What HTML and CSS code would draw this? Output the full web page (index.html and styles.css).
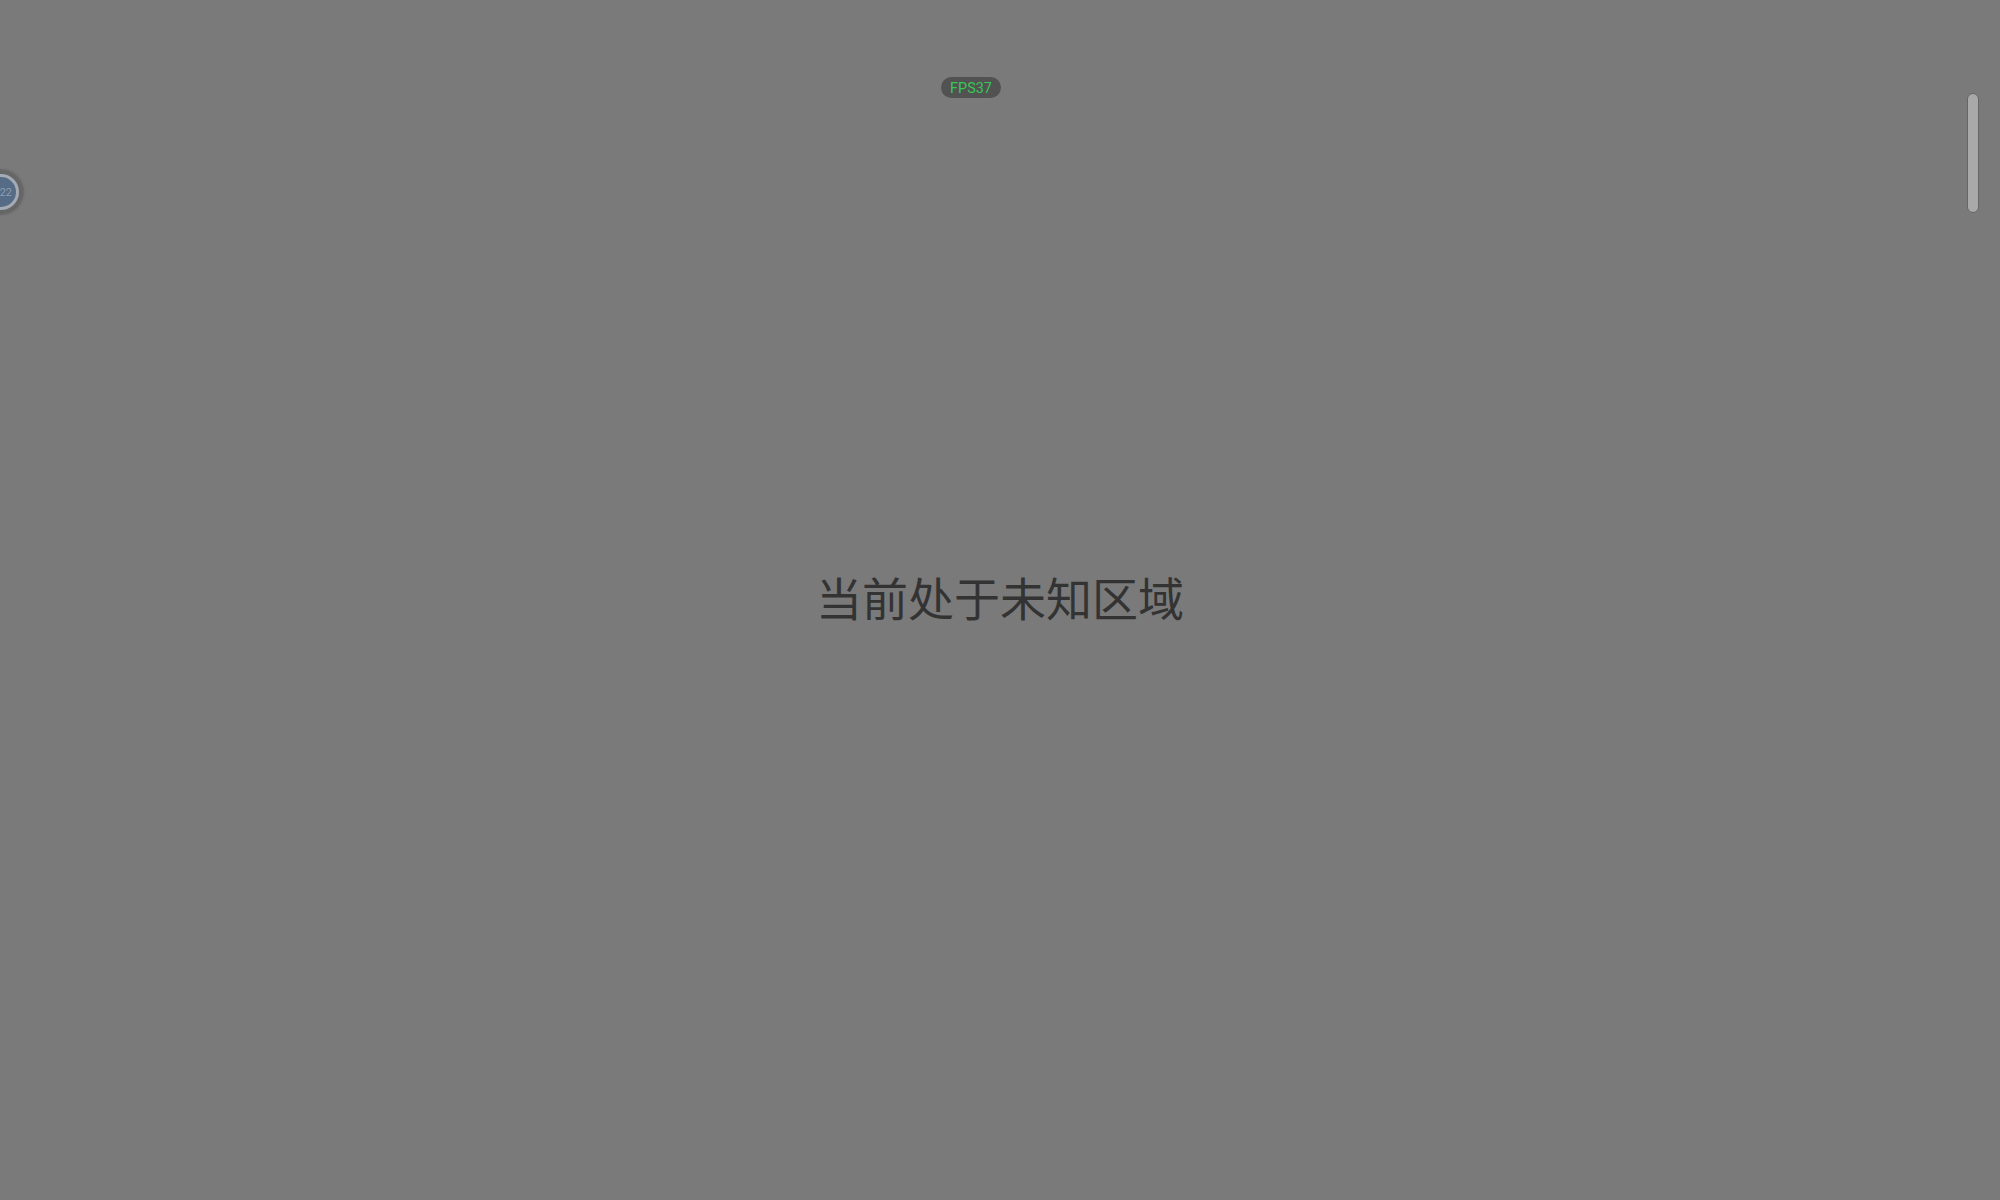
FILE: index.html
```html
<!DOCTYPE html>
<html lang="zh-CN">
<head>
<meta charset="utf-8">
<title>当前处于未知区域</title>
<link rel="stylesheet" href="styles.css">
</head>
<body>
<main class="stage">
  <h1 class="message">当前处于未知区域</h1>
</main>
<div class="fps">FPS37</div>
<div class="float-ball"><span class="ball-label">22</span></div>
<div class="scroll-thumb"></div>
</body>
</html>
```
FILE: styles.css
```css
html, body {
  margin: 0;
  height: 100%;
  overflow: hidden;
  background: #7a7a7a;
}
.stage {
  height: 100%;
  display: flex;
  align-items: center;
  justify-content: center;
}
.message {
  margin: 0 0 7px;
  font: 400 46px/1.3 "Noto Sans CJK SC", sans-serif;
  color: #333333;
}
.fps {
  position: absolute;
  left: 941px;
  top: 77px;
  width: 60px;
  height: 21px;
  border-radius: 11px;
  background: #525252;
  color: #38c755;
  font: 14.4px/23px Roboto, sans-serif;
  text-align: center;
}
.float-ball {
  position: absolute;
  left: -17px;
  top: 174px;
  width: 30px;
  height: 30px;
  border: 3px solid #a4abb4;
  border-radius: 50%;
  background: #566b86;
  box-shadow: 0 0 2px 5px #666666;
  display: flex;
  align-items: center;
  justify-content: flex-end;
}
.ball-label {
  font: 11px/1 Roboto, sans-serif;
  color: #8e9cad;
  padding-right: 4px;
  padding-top: 1px;
}
.scroll-thumb {
  position: absolute;
  left: 1967px;
  top: 93px;
  width: 10px;
  height: 118px;
  border: 1px solid #666666;
  border-radius: 6px;
  background: #a9a9a9;
}
```
